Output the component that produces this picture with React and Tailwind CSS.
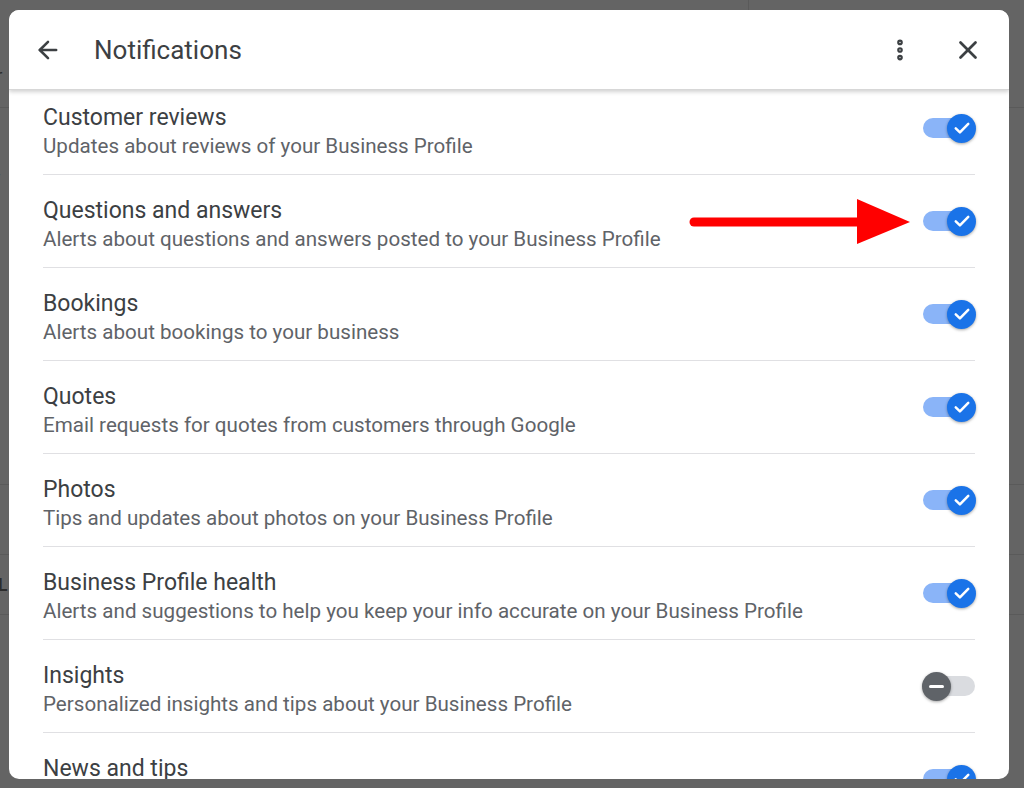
import React from 'react';
import { ArrowLeft, X, EllipsisVertical } from 'lucide-react';

const rows = [
  { title: 'Customer reviews', desc: 'Updates about reviews of your Business Profile', on: true },
  { title: 'Questions and answers', desc: 'Alerts about questions and answers posted to your Business Profile', on: true, arrow: true },
  { title: 'Bookings', desc: 'Alerts about bookings to your business', on: true },
  { title: 'Quotes', desc: 'Email requests for quotes from customers through Google', on: true },
  { title: 'Photos', desc: 'Tips and updates about photos on your Business Profile', on: true },
  { title: 'Business Profile health', desc: 'Alerts and suggestions to help you keep your info accurate on your Business Profile', on: true },
  { title: 'Insights', desc: 'Personalized insights and tips about your Business Profile', on: false },
  { title: 'News and tips', desc: 'Recommendations and best practices for your Business Profile', on: true },
];

const Toggle = ({ on }) => (
  <div className={`relative w-[52px] h-[20px] rounded-full flex items-center ${on ? 'bg-[#8ab4f8] justify-end' : 'bg-[#dadce0] justify-start'}`}>
    <div
      className={`w-[29px] h-[29px] rounded-full flex items-center justify-center shadow-[0_1px_3px_rgba(0,0,0,0.35)] ${on ? 'bg-[#1a73e8] -mr-[1px]' : 'bg-[#5f6368] -ml-[1px]'}`}
    >
      {on ? (
        <svg width="20" height="20" viewBox="0 0 24 24" fill="none">
          <path d="M4.5 12.5l5 4.8L19.5 7" stroke="white" strokeWidth="3" strokeLinecap="round" strokeLinejoin="round" />
        </svg>
      ) : (
        <div className="w-[15px] h-[3px] bg-white rounded-full" />
      )}
    </div>
  </div>
);

const RedArrow = () => (
  <svg width="222" height="46" viewBox="0 0 222 46" className="mr-[12px]">
    <line x1="5" y1="24" x2="172" y2="24" stroke="#ff0000" strokeWidth="9" strokeLinecap="round" />
    <polygon points="168,1 221,24 168,46" fill="#ff0000" />
  </svg>
);

const Row = ({ row }) => (
  <div className="h-[93px] flex items-center border-b border-[#e0e0e3]">
    <div className="flex-1 min-w-0 pt-[7px]">
      <div className="text-[23px] leading-[28px] text-[#3c4043]">{row.title}</div>
      <div className="text-[20.6px] leading-[28px] text-[#5f6368] whitespace-nowrap">{row.desc}</div>
    </div>
    {row.arrow && <RedArrow />}
    <Toggle on={row.on} />
  </div>
);

export default function App() {
  return (
    <div className="relative w-[1024px] h-[788px] overflow-hidden bg-[#646464]" style={{ fontFamily: 'Roboto, "Noto Sans", sans-serif' }}>
      {/* dimmed page behind */}
      <div className="flex flex-col text-[#2c2c2c] text-[18px] -ml-[14px]">
        <div className="h-[108px] border-b border-[#5a5a5a] flex items-end pb-[18px]">or</div>
        <div className="h-[95px] flex items-end text-[22px] font-medium pb-[4px]">V</div>
        <div className="h-[112px] flex items-end pb-[2px]">w</div>
        <div className="h-[170px] border-b border-[#5a5a5a] flex items-start pt-[100px]">s</div>
        <div className="h-[70px] border-b border-[#5a5a5a] flex flex-col pt-[28px] leading-[20px]"><span>y</span><span>o</span></div>
        <div className="h-[60px] border-b border-[#5a5a5a] flex items-center font-bold">CL</div>
        <div className="h-[80px] flex items-center">d</div>
      </div>
      <div className="absolute top-0 left-[748px] w-px h-[10px] bg-[#5a5a5a]" />

      {/* dialog */}
      <div className="absolute left-[9px] top-[10px] w-[1000px] h-[769px] bg-white rounded-[10px] overflow-hidden flex flex-col">
        <div className="relative z-10 h-[80px] shrink-0 bg-white flex items-center shadow-[0_2px_4px_rgba(0,0,0,0.18)] border-b border-[#d7d7d7]">
          <ArrowLeft size={28} strokeWidth={2.2} className="ml-[25px] text-[#3c4043]" />
          <div className="ml-[32px] text-[26px] text-[#3c4043] flex-1 pt-[1px]">Notifications</div>
          <EllipsisVertical size={26} strokeWidth={3.2} className="text-[#3c4043] mr-[40px]" />
          <X size={30} strokeWidth={2.2} className="text-[#3c4043] mr-[26px]" />
        </div>
        <div className="-mt-[8px] px-[34px] flex flex-col">
          {rows.map((row) => (
            <Row key={row.title} row={row} />
          ))}
        </div>
      </div>
    </div>
  );
}
